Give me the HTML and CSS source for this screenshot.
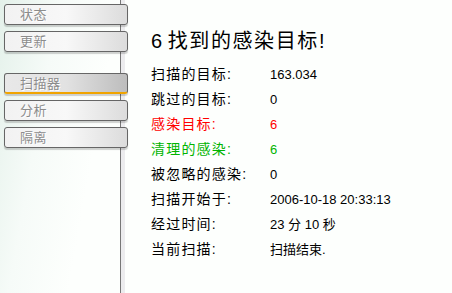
FILE: index.html
```html
<!DOCTYPE html>
<html>
<head>
<meta charset="utf-8">
<link rel="stylesheet" href="styles.css">
</head>
<body>
<div class="app">
  <nav class="sidebar">
    <div class="group">
      <div class="btn">状态</div>
      <div class="btn">更新</div>
    </div>
    <div class="group">
      <div class="btn active">扫描器</div>
      <div class="btn">分析</div>
      <div class="btn">隔离</div>
    </div>
  </nav>
  <div class="divider"></div>
  <main class="main">
    <h1 class="title">6 <span class="cjk">找到的感染目标</span>!</h1>
    <div class="stats">
      <div class="row"><span class="label">扫描的目标:</span><span class="value">163.034</span></div>
      <div class="row"><span class="label">跳过的目标:</span><span class="value">0</span></div>
      <div class="row red"><span class="label">感染目标:</span><span class="value">6</span></div>
      <div class="row green"><span class="label">清理的感染:</span><span class="value">6</span></div>
      <div class="row"><span class="label">被忽略的感染:</span><span class="value">0</span></div>
      <div class="row"><span class="label">扫描开始于:</span><span class="value">2006-10-18 20:33:13</span></div>
      <div class="row"><span class="label">经过时间:</span><span class="value">23 分 10 秒</span></div>
      <div class="row"><span class="label">当前扫描:</span><span class="value">扫描结束.</span></div>
    </div>
  </main>
</div>
</body>
</html>
```
FILE: styles.css
```css
html, body {
  margin: 0;
  padding: 0;
  width: 452px;
  height: 293px;
  overflow: hidden;
  background: #fdfffd;
  font-family: "Liberation Sans", "Noto Sans CJK SC", sans-serif;
}
.app {
  display: flex;
  height: 293px;
}
.sidebar {
  width: 120px;
  flex: none;
  background: linear-gradient(100deg, #e4f1ea 0%, #f6fbf8 35%, #fdfffd 70%);
  padding-top: 4px;
  display: flex;
  flex-direction: column;
  gap: 21px;
  position: relative;
  z-index: 2;
}
.group {
  display: flex;
  flex-direction: column;
  gap: 6px;
}
.btn {
  margin-left: 4px;
  width: 122px;
  height: 19px;
  margin-right: -10px;
  box-sizing: content-box;
  border: 1px solid #666;
  border-radius: 3px;
  background: linear-gradient(to right, #f2f2f2 0%, #f8f8f8 50%, #dcdcdc 100%);
  box-shadow: 0 2px 1px rgba(0,0,0,0.18);
  color: #8c8c8c;
  font-size: 13px;
  line-height: 19px;
  text-indent: 15px;
  letter-spacing: 0.5px;
  text-shadow: 1px 1px 0 #fff;
}
.btn.active {
  background: linear-gradient(to right, #e8e8e8 0%, #e2e2e2 50%, #bdbdbd 100%);
  border-bottom: 2px solid #f0a400;
  height: 18px;
}
.divider {
  width: 5px;
  flex: none;
  border-left: 1px solid #777;
  background: #ececee;
  box-sizing: border-box;
}
.main {
  flex: 1;
  padding-left: 26px;
  color: #000;
}
.title {
  margin: 28px 0 0 0;
  font-size: 20px;
  font-weight: normal;
  line-height: 26px;
}
.title .cjk {
  letter-spacing: 1.6px;
}
.stats {
  margin-top: 8px;
  font-size: 13px;
}
.row {
  display: flex;
  height: 25px;
  line-height: 25px;
}
.label {
  width: 119px;
  flex: none;
  font-size: 14px;
  letter-spacing: 1.2px;
}
.red { color: #ff0000; }
.green { color: #00b400; }
```
